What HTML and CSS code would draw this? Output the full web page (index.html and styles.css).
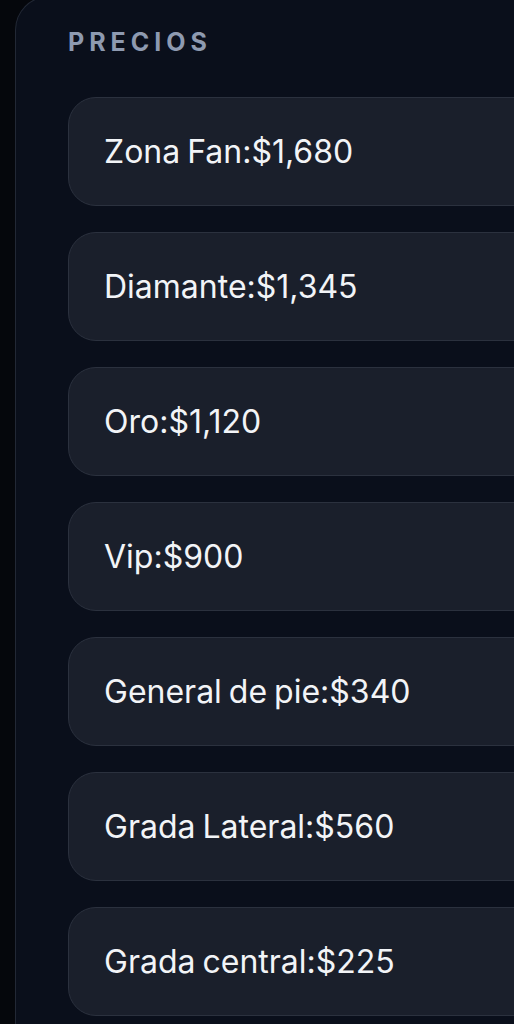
FILE: index.html
```html
<!DOCTYPE html>
<html lang="es">
<head>
<meta charset="UTF-8">
<title>Precios</title>
<link rel="stylesheet" href="styles.css">
</head>
<body>
<div class="panel">
	<h2 class="title">PRECIOS</h2>
	<ul class="prices">
		<li>Zona Fan:$1,680</li>
		<li>Diamante:$1,345</li>
		<li>Oro:$1,120</li>
		<li>Vip:$900</li>
		<li>General de pie:$340</li>
		<li>Grada Lateral:$560</li>
		<li>Grada central:$225</li>
	</ul>
</div>
</body>
</html>
```

FILE: styles.css
```css
html, body {
margin:0;
padding:0;
overflow:hidden;
background:#05070c;
font-family:Inter, "Noto Sans", "Liberation Sans", sans-serif;
}
.panel {
margin-left:15px;
width:600px;
min-height:1100px;
box-sizing:border-box;
padding:28px 0 0 52px;
background:#0a0f1b;
border-left:1px solid #222835;
border-top:1px solid #222835;
border-top-left-radius:34px;
margin-top:-4px;
}
.title {
margin:0 0 38px 0;
font-size:25px;
line-height:34px;
font-weight:700;
letter-spacing:5px;
color:#8e9ab0;
}
.prices {
list-style:none;
margin:0;
padding:0;
display:flex;
flex-direction:column;
gap:26px;
}
.prices li {
height:107px;
display:flex;
align-items:center;
padding-left:35px;
background:#1a1f2b;
border:1px solid #2b313e;
border-radius:28px;
font-size:32px;
word-spacing:-2px;
color:#f2f4f7;
}
```
